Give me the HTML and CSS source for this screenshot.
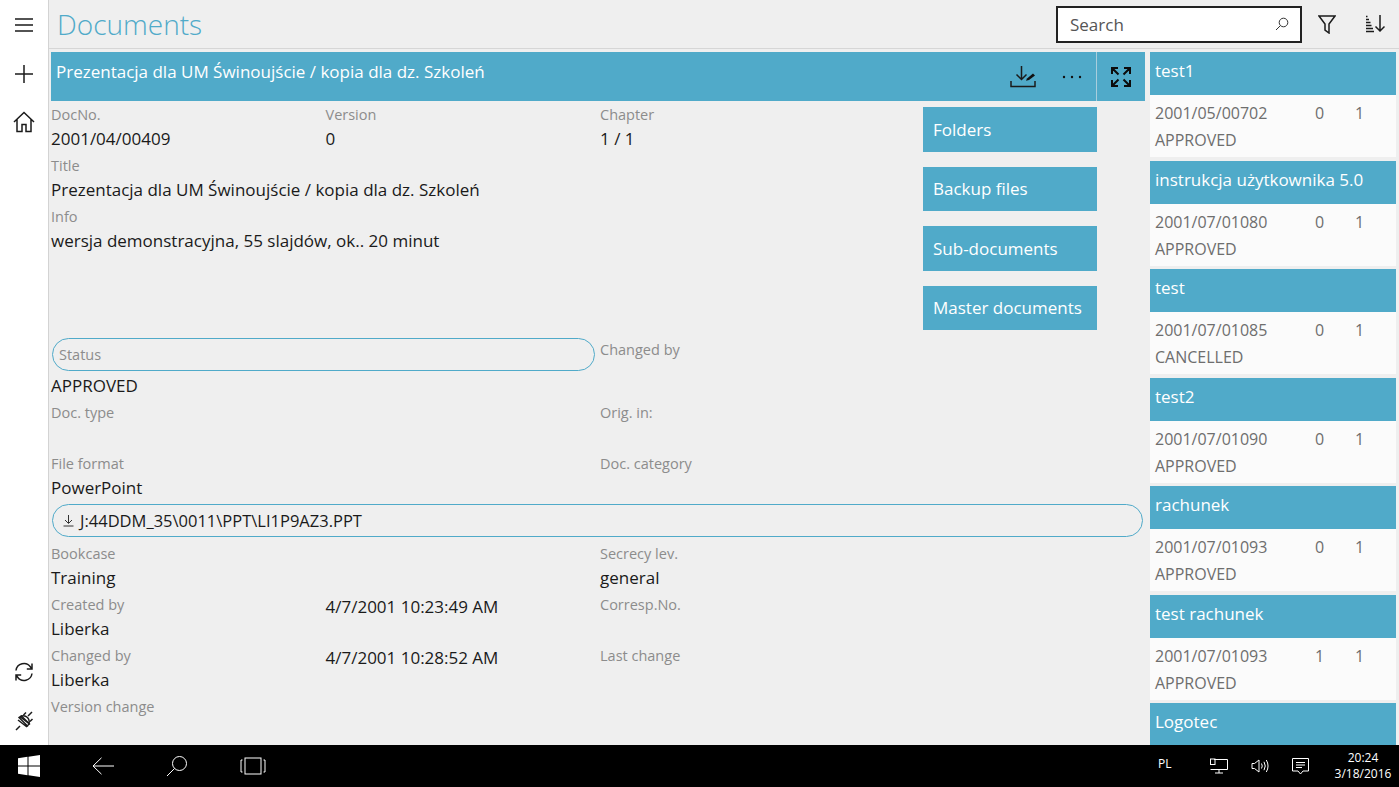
FILE: index.html
```html
<!DOCTYPE html>
<html lang="pl">
<head>
<meta charset="utf-8">
<title>Documents</title>
<link rel="stylesheet" href="styles.css">
</head>
<body>
<div class="app">
  <div class="workspace">
    <nav class="sidebar">
      <button class="side-btn first"><svg width="20" height="16" viewBox="0 0 20 16"><path d="M1 2h18M1 8h18M1 14h18" class="st"/></svg></button>
      <button class="side-btn add"><svg width="20" height="20" viewBox="0 0 20 20"><path d="M10 1v18M1 10h18" class="st"/></svg></button>
      <button class="side-btn home"><svg width="22" height="22" viewBox="0 0 22 22"><path d="M1 11 11 1.5 21 11M4 8.5V20.5H9V13.5H13V20.5H18V8.5" class="st"/></svg></button>
      <div class="side-spacer"></div>
      <button class="side-btn"><svg width="20" height="20" viewBox="0 0 20 20"><path d="M2 8.5A8 8 0 0 1 16.5 5L18 7M18 11.5A8 8 0 0 1 3.5 15L2 13M18 1.5V7H12.8M2 18.5V13H7.2" class="st"/></svg></button>
      <button class="side-btn plug"><svg width="20" height="20" viewBox="0 0 20 20"><path d="M5 6.5 13.5 15A4.5 4.5 0 0 0 5 6.5ZM6 15 2 19M14 5l4-4M4 9l9 7M6.5 6l9 7" class="st" transform="rotate(0 10 10)"/><path d="M7 4.5 16 13.5M12 1.5 9.5 4M18.5 8 16 10.5" class="st"/></svg></button>
    </nav>
    <main class="content">
      <header class="topbar">
        <h1 class="page-title">Documents</h1>
        <div class="search"><span class="search-text">Search</span><svg width="14" height="14" viewBox="0 0 14 14"><circle cx="8.5" cy="5.5" r="4.3" class="st thin"/><path d="M5.4 8.6 1 13" class="st thin"/></svg></div>
        <button class="tool-btn"><svg width="18" height="19" viewBox="0 0 18 19"><path d="M1 1h16l-6 8v9l-4-3V9Z" class="st"/></svg></button>
        <button class="tool-btn"><svg width="20" height="18" viewBox="0 0 20 18"><path d="M15 0v16M10.5 11.5 15 16l4.500-4.500" class="st"/><path d="M1 1.500h1.500M1 4.500h3M1 7.500h4.500M1 10.500h5.500M1 13.500h7M1 16.500h8" class="st"/></svg></button>
      </header>
      <div class="panes">
        <section class="detail">
          <div class="detail-head">
            <div class="detail-title">Prezentacja dla UM Świnoujście / kopia dla dz. Szkoleń</div>
            <button class="head-btn"><svg width="26" height="22" viewBox="0 0 26 22"><path d="M11.500 0v13M6.500 8.500l5 5 5-5M1 15v5.500h24V15" class="st"/><path d="M17 12.500l6-5 2 2-6 4.500-3 .8Z" class="fill"/></svg></button>
            <button class="head-btn dots"><svg width="20" height="4" viewBox="0 0 20 4"><circle cx="2" cy="2" r="1.200" class="fill"/><circle cx="10" cy="2" r="1.200" class="fill"/><circle cx="18" cy="2" r="1.200" class="fill"/></svg></button>
            <button class="head-btn expand"><svg width="20" height="20" viewBox="0 0 20 20"><path d="M1 7V1h6M1 1l6.500 6.500M13 1h6v6M19 1l-6.500 6.500M1 13v6h6M1 19l6.500-6.500M13 19h6v-6M19 19l-6.500-6.500" class="st two"/></svg></button>
          </div>
          <div class="upper">
            <div class="info">
              <div class="field"><div class="label">DocNo.</div><div class="value">2001/04/00409</div></div>
              <div class="field"><div class="label">Version</div><div class="value">0</div></div>
              <div class="field"><div class="label">Chapter</div><div class="value">1 / 1</div></div>
              <div class="field wide"><div class="label">Title</div><div class="value">Prezentacja dla UM Świnoujście / kopia dla dz. Szkoleń</div></div>
              <div class="field wide"><div class="label">Info</div><div class="value">wersja demonstracyjna, 55 slajdów, ok.. 20 minut</div></div>
            </div>
            <div class="actions">
              <button class="action">Folders</button>
              <button class="action">Backup files</button>
              <button class="action">Sub-documents</button>
              <button class="action">Master documents</button>
            </div>
          </div>
          <div class="lower">
            <div class="status-field">
              <div class="pill status-pill"><span class="label">Status</span></div>
              <div class="value">APPROVED</div>
            </div>
            <div class="field"><div class="label">Changed by</div></div>
            <div class="field row-type"><div class="label">Doc. type</div></div>
            <div class="field row-type"><div class="label">Orig. in:</div></div>
            <div class="field"><div class="label">File format</div><div class="value">PowerPoint</div></div>
            <div class="field"><div class="label">Doc. category</div></div>
            <div class="pill file-pill"><svg width="11" height="12" viewBox="0 0 11 12"><path d="M5.500 0v8M2 5l3.500 3.500L9 5M0.500 11h10" class="st one"/></svg><span class="file-name">J:44DDM_35\0011\PPT\LI1P9AZ3.PPT</span></div>
            <div class="field"><div class="label">Bookcase</div><div class="value">Training</div></div>
            <div class="field"><div class="label">Secrecy lev.</div><div class="value">general</div></div>
            <div class="triple">
              <div class="field"><div class="label">Created by</div><div class="value">Liberka</div></div>
              <div class="value date">4/7/2001 10:23:49 AM</div>
              <div class="field"><div class="label">Corresp.No.</div></div>
              <div class="field"><div class="label">Changed by</div><div class="value">Liberka</div></div>
              <div class="value date">4/7/2001 10:28:52 AM</div>
              <div class="field"><div class="label">Last change</div></div>
              <div class="field"><div class="label">Version change</div></div>
            </div>
          </div>
        </section>
        <aside class="list">
          <article class="card"><div class="card-head">test1</div><div class="card-body"><div class="card-line"><span class="no">2001/05/00702</span><span class="v">0</span><span class="c">1</span></div><div class="card-line">APPROVED</div></div></article>
          <article class="card"><div class="card-head">instrukcja użytkownika 5.0</div><div class="card-body"><div class="card-line"><span class="no">2001/07/01080</span><span class="v">0</span><span class="c">1</span></div><div class="card-line">APPROVED</div></div></article>
          <article class="card"><div class="card-head">test</div><div class="card-body"><div class="card-line"><span class="no">2001/07/01085</span><span class="v">0</span><span class="c">1</span></div><div class="card-line">CANCELLED</div></div></article>
          <article class="card"><div class="card-head">test2</div><div class="card-body"><div class="card-line"><span class="no">2001/07/01090</span><span class="v">0</span><span class="c">1</span></div><div class="card-line">APPROVED</div></div></article>
          <article class="card"><div class="card-head">rachunek</div><div class="card-body"><div class="card-line"><span class="no">2001/07/01093</span><span class="v">0</span><span class="c">1</span></div><div class="card-line">APPROVED</div></div></article>
          <article class="card"><div class="card-head">test rachunek</div><div class="card-body"><div class="card-line"><span class="no">2001/07/01093</span><span class="v">1</span><span class="c">1</span></div><div class="card-line">APPROVED</div></div></article>
          <article class="card"><div class="card-head">Logotec</div></article>
        </aside>
      </div>
    </main>
  </div>
  <footer class="taskbar">
    <div class="task-left">
      <span class="task-icon"><svg width="22" height="22" viewBox="0 0 22 22"><path d="M0 3.200 9.500 1.800V10.400H0ZM10.500 1.700 22 0V10.400H10.500ZM0 11.500H9.500V20.200L0 18.800ZM10.500 11.500H22V22L10.500 20.300Z" fill="#fff"/></svg></span>
      <span class="task-icon"><svg width="22" height="18" viewBox="0 0 22 18"><path d="M22 9H1M9.500 .8 1 9l8.500 8.200" class="wh"/></svg></span>
      <span class="task-icon"><svg width="22" height="22" viewBox="0 0 22 22"><circle cx="13.500" cy="8.500" r="7" class="wh"/><path d="M8.500 13.500 1 21" class="wh"/></svg></span>
      <span class="task-icon"><svg width="26" height="18" viewBox="0 0 26 18"><rect x="5" y="1" width="16" height="16" class="wh"/><path d="M2.500 3H1v12h1.500M23.500 3H25v12h-1.500" class="wh"/></svg></span>
    </div>
    <div class="tray">
      <span class="lang">PL</span>
      <span class="tray-icon"><svg width="18" height="16" viewBox="0 0 18 16"><path d="M4 1.500h13.500v10H.5M9 11.500V15M5 15h8" class="wh"/><rect x=".5" y="1" width="4.500" height="5.500" class="wh" fill="#000"/></svg></span>
      <span class="tray-icon"><svg width="18" height="14" viewBox="0 0 18 14"><path d="M1 4.500h2.500L8 1v12L3.500 9.500H1ZM10.500 4.500q1.500 2.500 0 5M13 2.800q2.500 4.200 0 8.400M15.300 1q3.500 6 0 12" class="wh"/></svg></span>
      <span class="tray-icon"><svg width="17" height="17" viewBox="0 0 17 17"><path d="M.5.500h16v12.500H11l-2.500 3-2.500-3H.5ZM4 4.500h9M4 7h9M4 9.500h6" class="wh"/></svg></span>
      <div class="clock"><div>20:24</div><div>3/18/2016</div></div>
    </div>
  </footer>
</div>
</body>
</html>
```

FILE: styles.css
```css
* { box-sizing: border-box; }
html, body { margin: 0; padding: 0; }
body { font-family: "Open Sans", "Noto Sans", sans-serif; background: #000; overflow: hidden; }
button { font: inherit; border: 0; background: none; padding: 0; margin: 0; color: inherit; }
svg { display: block; }
.st { fill: none; stroke: #1b1b1b; stroke-width: 1.500; }
.st.thin { stroke: #333; stroke-width: 1; }
.st.one { stroke: #333; stroke-width: 1; }
.st.two { stroke: #0c0c0c; stroke-width: 2; }
.fill { fill: #111; }
.wh { fill: none; stroke: #fff; stroke-width: 1; }

.app { width: 1399px; height: 787px; display: flex; flex-direction: column; }
.workspace { height: 745px; display: flex; overflow: hidden; background: #efefef; }

.sidebar { width: 49px; flex: none; background: #fff; border-right: 1px solid #d3d3d3; display: flex; flex-direction: column; align-items: center; }
.side-btn { width: 48px; height: 49px; display: flex; align-items: center; justify-content: center; }
.side-btn.first { height: 49px; }
.side-btn.add { height: 49px; }
.side-btn.home { height: 48px; }
.side-spacer { flex: 1; }
.side-btn.plug { height: 49px; margin-bottom: 0; }

.content { flex: 1; min-width: 0; display: flex; flex-direction: column; }
.topbar { height: 49px; flex: none; display: flex; align-items: center; padding-left: 8px; border-bottom: 1px solid #d6d6d6; }
.page-title { margin: 0; flex: 1; font-size: 28px; font-weight: 300; color: #50aac9; line-height: 49px; }
.search { width: 246px; height: 37px; margin-right: 1px; border: 2px solid #222; background: #fff; display: flex; align-items: center; justify-content: space-between; padding: 0 11px 0 12px; }
.search-text { font-size: 17px; color: #555; }
.tool-btn { width: 48px; height: 48px; display: flex; align-items: center; justify-content: center; }

.panes { flex: 1; min-height: 0; display: flex; padding: 3px 3px 0 2px; }
.detail { width: 1094px; flex: none; }
.detail-head { height: 49px; background: #50aac9; display: flex; align-items: center; }
.detail-title { flex: 1; padding: 0 0 10px 5px; color: #fff; font-size: 17px; white-space: nowrap; }
.head-btn { width: 49px; height: 49px; display: flex; align-items: center; justify-content: center; }
.head-btn.expand { border-left: 1px solid #a9cedd; width: 49px; }

.upper { height: 237px; display: flex; padding-top: 2px; }
.info { width: 872px; flex: none; display: grid; grid-template-columns: 274.500px 274.500px 1fr; grid-auto-rows: 51px; }
.wide { grid-column: 1 / -1; }
.label { font-size: 14.500px; line-height: 24px; color: #8c8c8c; white-space: nowrap; }
.value { font-size: 17px; line-height: 23px; color: #1a1a1a; white-space: nowrap; }
.actions { width: 174px; flex: none; display: flex; flex-direction: column; gap: 15px; padding-top: 4px; }
.action { height: 44.500px; background: #50aac9; color: #fff; font-size: 17px; text-align: left; padding: 0 10px; white-space: nowrap; }

.lower { display: grid; grid-template-columns: 549px 1fr; }
.status-field { height: 63px; }
.pill { border: 1.500px solid #50aac9; border-radius: 17px; height: 33px; display: flex; align-items: center; margin-left: 1px; }
.status-pill { width: 543px; padding-left: 6px; margin-bottom: 3px; }
.row-type { height: 51px; }
.lower .field { height: 51px; }
.lower > .field:nth-child(2) { height: 63px; }
.lower > .field:nth-child(5), .lower > .field:nth-child(6) { height: 52px; }
.file-pill { grid-column: 1 / -1; width: 1091px; padding-left: 10px; gap: 6px; margin-bottom: 5px; }
.file-name { font-size: 16.500px; color: #1a1a1a; white-space: nowrap; }
.triple { grid-column: 1 / -1; display: grid; grid-template-columns: 274.500px 274.500px 1fr; }
.date { line-height: 28px; }

.list { width: 246px; flex: none; margin-left: 5px; overflow: hidden; }
.card { height: 108.500px; }
.card-head { height: 43px; background: #50aac9; color: #fff; font-size: 17px; line-height: 38px; padding-left: 5px; white-space: nowrap; }
.card-body { height: 62px; background: #fbfbfb; padding: 5px 5px 0; font-size: 16px; color: #6e6e6e; }
.card-line { display: flex; line-height: 27px; white-space: nowrap; }
.no { width: 160px; }
.v { width: 40px; }

.taskbar { height: 42px; flex: none; background: #000; display: flex; justify-content: space-between; align-items: center; color: #fff; }
.task-left { display: flex; align-items: center; padding-left: 18px; }
.task-icon { display: flex; align-items: center; width: 74px; }
.tray { display: flex; align-items: center; }
.lang { font-size: 12px; width: 40px; margin-bottom: 6px; }
.tray-icon { width: 41px; display: flex; justify-content: center; }
.clock { width: 68px; font-size: 12px; line-height: 16px; text-align: center; padding-right: 4px; margin-left: 10px; }
```
